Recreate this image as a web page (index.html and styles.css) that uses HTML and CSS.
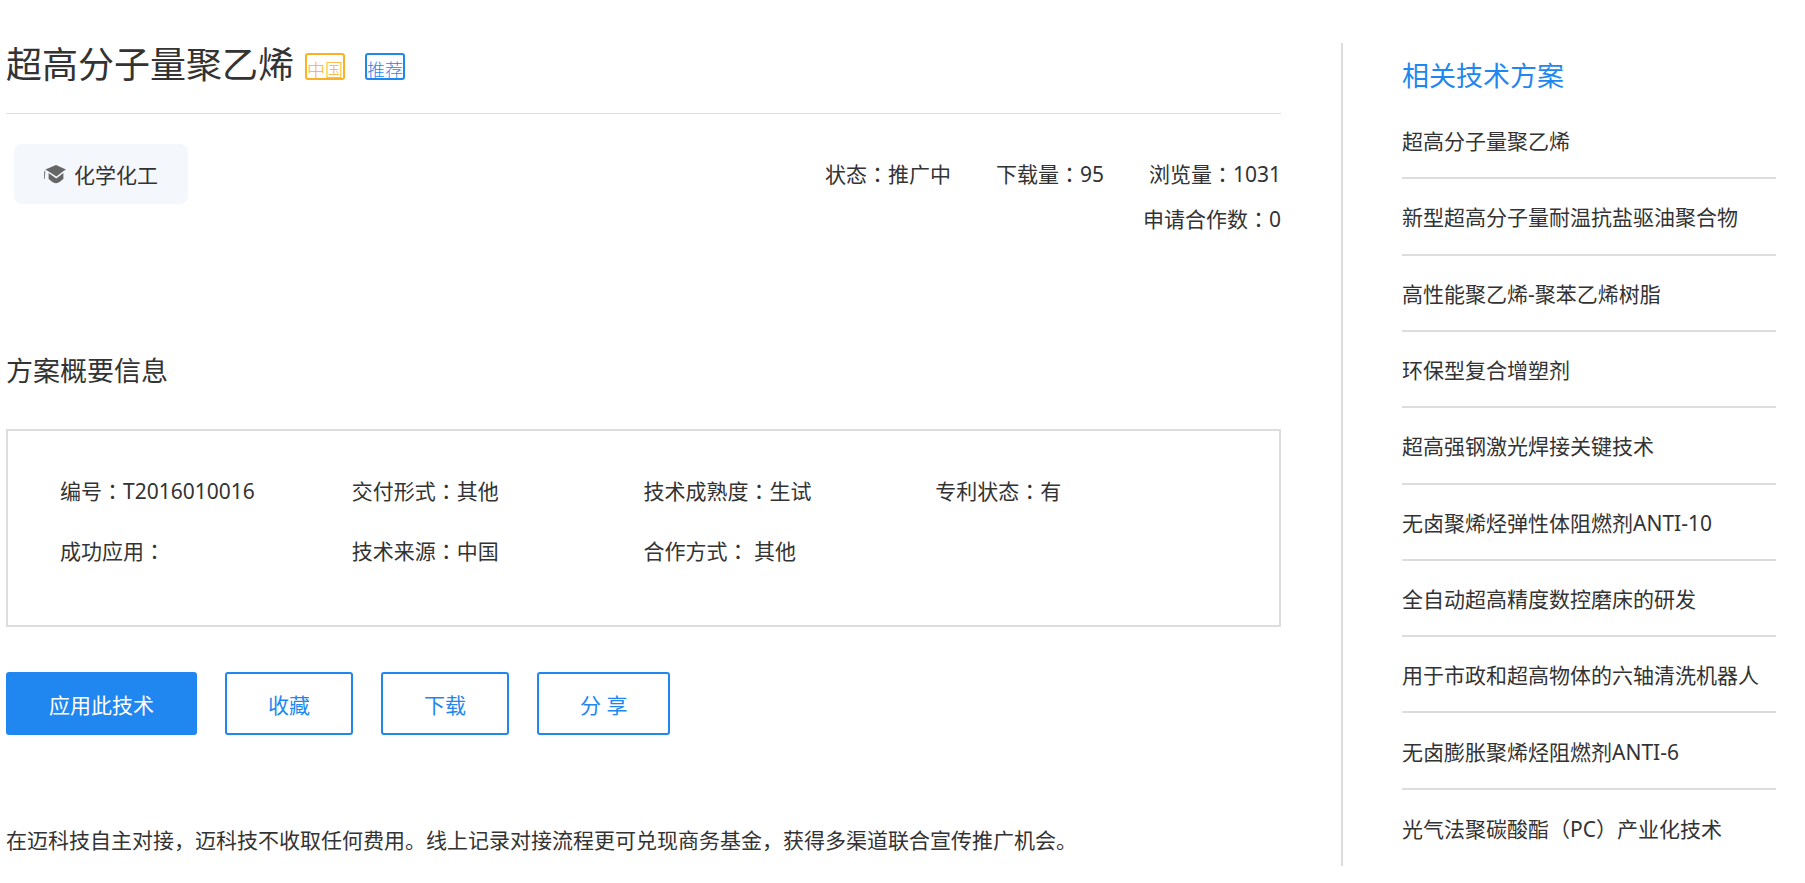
FILE: index.html
```html
<!DOCTYPE html>
<html lang="zh-CN">
<head>
    <meta charset="UTF-8">
    <meta name="viewport" content="width=device-width, initial-scale=1.0">
    <title>超高分子量聚乙烯</title>
    <link rel="stylesheet" href="styles.css">
</head>
<body>
    <div class="page">
        <main class="detail">
            <div class="detail-header">
                <h1>超高分子量聚乙烯</h1>
                <span class="tag tag-country">中国</span>
                <span class="tag tag-recommend">推荐</span>
            </div>

            <div class="detail-meta">
                <div class="category">
                    <svg class="category-icon" viewBox="0 0 22 20" aria-hidden="true">
                        <path d="M12 1 L22 5.4 L19.6 7 L12.4 12.4 L4.6 7.4 L1.4 5.4 Z"/>
                        <path d="M4.6 9 L12.3 14.4 L19.4 9 V15 C17 16.4 16 18.8 12 19.2 C8 18.8 7 16.4 4.6 15 Z"/>
                        <path d="M0.2 7.4 L1.2 6.6 V9 L0.8 15 H0.2 Z"/>
                    </svg>
                    <span>化学化工</span>
                </div>
                <ul class="stats">
                    <li>状态<span class="colon" lang="zh-TW">：</span>推广中</li>
                    <li>下载量<span class="colon" lang="zh-TW">：</span>95</li>
                    <li>浏览量<span class="colon" lang="zh-TW">：</span>1031</li>
                    <li>申请合作数<span class="colon" lang="zh-TW">：</span>0</li>
                </ul>
            </div>

            <h2>方案概要信息</h2>
            <ul class="summary">
                <li>编号<span class="colon" lang="zh-TW">：</span>T2016010016</li>
                <li>交付形式<span class="colon" lang="zh-TW">：</span>其他</li>
                <li>技术成熟度<span class="colon" lang="zh-TW">：</span>生试</li>
                <li>专利状态<span class="colon" lang="zh-TW">：</span>有</li>
                <li>成功应用<span class="colon" lang="zh-TW">：</span></li>
                <li>技术来源<span class="colon" lang="zh-TW">：</span>中国</li>
                <li>合作方式<span class="colon" lang="zh-TW">：</span> 其他</li>
            </ul>

            <div class="actions">
                <button type="button" class="btn btn-primary">应用此技术</button>
                <button type="button" class="btn">收藏</button>
                <button type="button" class="btn">下载</button>
                <button type="button" class="btn">分 享</button>
            </div>

            <p class="notice">在迈科技自主对接，迈科技不收取任何费用。线上记录对接流程更可兑现商务基金，获得多渠道联合宣传推广机会。</p>
        </main>

        <aside class="related">
            <h2>相关技术方案</h2>
            <ul class="related-list">
                <li><a href="#">超高分子量聚乙烯</a></li>
                <li><a href="#">新型超高分子量耐温抗盐驱油聚合物</a></li>
                <li><a href="#">高性能聚乙烯-聚苯乙烯树脂</a></li>
                <li><a href="#">环保型复合增塑剂</a></li>
                <li><a href="#">超高强钢激光焊接关键技术</a></li>
                <li><a href="#">无卤聚烯烃弹性体阻燃剂ANTI-10</a></li>
                <li><a href="#">全自动超高精度数控磨床的研发</a></li>
                <li><a href="#">用于市政和超高物体的六轴清洗机器人</a></li>
                <li><a href="#">无卤膨胀聚烯烃阻燃剂ANTI-6</a></li>
                <li><a href="#">光气法聚碳酸酯（PC）产业化技术</a></li>
            </ul>
        </aside>
    </div>
</body>
</html>
```
FILE: styles.css
```css
* {
    box-sizing: border-box;
    margin: 0;
    padding: 0;
}
body {
    background: #fff;
    color: #333;
    font-family: "Noto Sans", "Noto Sans CJK SC", sans-serif;
    font-size: 21px;
}
ul {
    list-style: none;
}
a {
    color: inherit;
    text-decoration: none;
}
h1, h2 {
    font-weight: normal;
}
.page {
    display: flex;
    gap: 60px;
    padding: 43px 29px 16px 6px;
}
.detail {
    flex: 1;
}
.detail-header {
    display: flex;
    align-items: center;
    padding-bottom: 26px;
    border-bottom: 1px solid #ddd;
}
.detail-header h1 {
    font-size: 36px;
    line-height: 44px;
}
.tag {
    height: 27px;
    margin-top: 2px;
    margin-left: 11px;
    border: 2px solid;
    border-radius: 3px;
    font-size: 18px;
    font-weight: 300;
    line-height: 30px;
}
.tag-country {
    color: #fbb124;
}
.tag-recommend {
    margin-left: 20px;
    color: #1f87ef;
}
.detail-meta {
    display: flex;
    justify-content: space-between;
    align-items: flex-start;
    padding-top: 30px;
}
.category {
    display: flex;
    align-items: center;
    gap: 8px;
    height: 60px;
    margin-left: 8px;
    padding: 0 30px;
    background: #f4f8fd;
    border-radius: 8px;
}
.category-icon {
    width: 22px;
    height: 20px;
    fill: #666;
}
.stats {
    display: flex;
    flex-wrap: wrap;
    justify-content: flex-end;
    column-gap: 45px;
    max-width: 520px;
    padding-top: 8px;
    line-height: 45px;
}
/* centred full-width colon */
.colon {
    font-family: "Noto Sans CJK TC", sans-serif;
    line-height: 1;
}
.detail h2 {
    margin-top: 109px;
    font-size: 27px;
    line-height: 40px;
}
.summary {
    display: grid;
    grid-template-columns: repeat(4, 1fr);
    margin-top: 38px;
    padding: 30px 52px 44px;
    border: 2px solid #ddd;
    line-height: 60px;
}
.actions {
    display: flex;
    gap: 28px;
    margin-top: 45px;
}
.btn {
    height: 63px;
    padding: 0 41px;
    background: #fff;
    color: #1f87ef;
    border: 2px solid #1f87ef;
    border-radius: 3px;
    font-family: inherit;
    font-size: 21px;
    cursor: pointer;
}
.btn-primary {
    background: #1f87ef;
    color: #fff;
}
.notice {
    margin-top: 85px;
    padding-bottom: 6px;
    line-height: 40px;
}
.related {
    display: flex;
    flex-direction: column;
    width: 435px;
    padding: 5px 0 0 59px;
    border-left: 2px solid #ddd;
}
.related h2 {
    color: #1f87ef;
    font-size: 27px;
    line-height: 55px;
}
.related-list {
    flex: 1;
    display: grid;
    grid-auto-rows: 1fr;
}
.related-list li {
    display: flex;
    align-items: center;
    border-bottom: 2px solid #ddd;
}
.related-list li:last-child {
    border-bottom: none;
}
```
